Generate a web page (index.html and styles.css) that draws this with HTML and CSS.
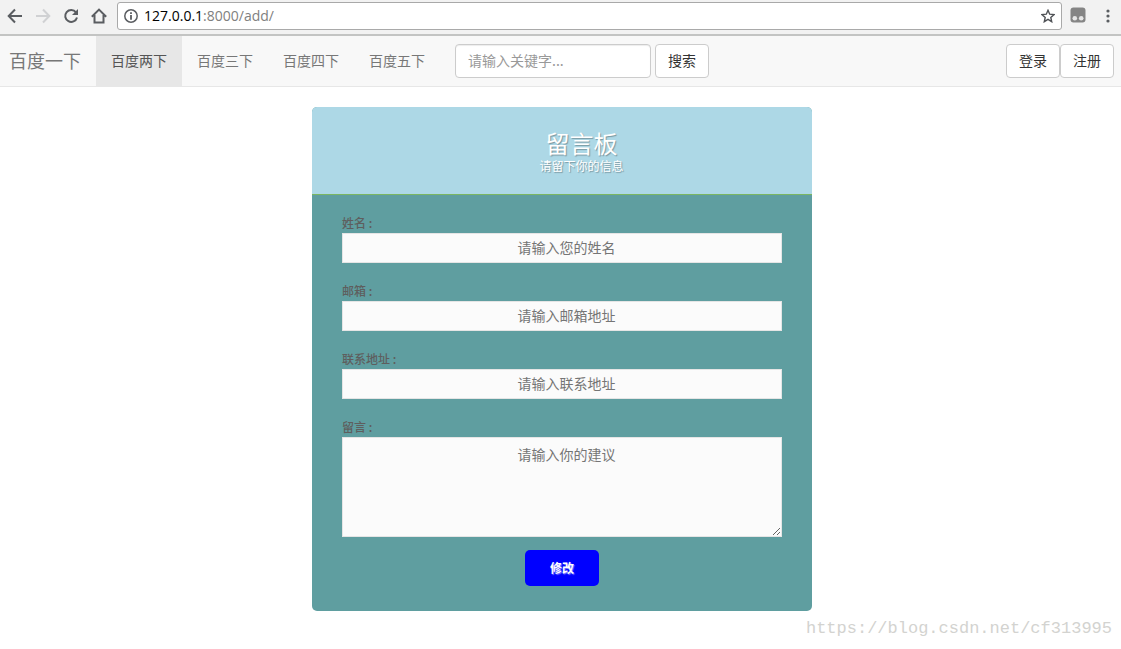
FILE: index.html
```html
<!DOCTYPE html>
<html lang="zh-CN">
<head>
<meta charset="utf-8">
<title>留言板</title>
<link rel="stylesheet" href="styles.css">
</head>
<body>
<div class="toolbar">
  <div class="toolbar-nav">
    <button class="tool" type="button" aria-label="后退"><svg width="16" height="16" viewBox="0 0 16 16"><path d="M15 8H2M8 1.5L1.7 8L8 14.5" fill="none" stroke="#5a5d61" stroke-width="2"/></svg></button>
    <button class="tool" type="button" aria-label="前进"><svg width="16" height="16" viewBox="0 0 16 16"><path d="M1 8H14M8 1.5L14.3 8L8 14.5" fill="none" stroke="#d0d1d3" stroke-width="2"/></svg></button>
    <button class="tool" type="button" aria-label="刷新"><svg width="16" height="16" viewBox="0 0 16 16"><path d="M13 4.3A6 6 0 1 0 14 9.5" fill="none" stroke="#5a5d61" stroke-width="2"/><path d="M15 1V7H9Z" fill="#5a5d61"/></svg></button>
    <button class="tool" type="button" aria-label="主页"><svg width="16" height="16" viewBox="0 0 16 16"><path d="M0.8 8.7L8 1.6L15.2 8.7M3.5 7V14.5H12.5V7" fill="none" stroke="#5a5d61" stroke-width="2"/></svg></button>
  </div>
  <div class="address">
    <svg width="14" height="14" viewBox="0 0 14 14"><circle cx="7" cy="7" r="6.2" fill="none" stroke="#5a5d61" stroke-width="1.5"/><path d="M6.1 3.2H7.9V5H6.1ZM6.1 6H7.9V10.8H6.1Z" fill="#5a5d61"/></svg>
    <span class="url"><span class="host">127.0.0.1</span>:8000/add/</span>
    <svg width="14" height="14" viewBox="0 0 14 14"><path d="M7 1.3L8.7 5.2L13 5.6L9.8 8.4L10.7 12.7L7 10.4L3.3 12.7L4.2 8.4L1 5.6L5.3 5.2Z" fill="none" stroke="#4f5256" stroke-width="1.4"/></svg>
  </div>
  <button class="tool" type="button" aria-label="扩展"><svg width="16" height="16" viewBox="0 0 16 16"><rect x="0.5" y="0.5" width="15" height="15" rx="3" fill="#858585"/><circle cx="4.8" cy="11.3" r="2.3" fill="#e6e6e6"/><circle cx="11.2" cy="11.3" r="2.3" fill="#e6e6e6"/></svg></button>
  <button class="tool menu" type="button" aria-label="菜单"><svg width="4" height="14" viewBox="0 0 4 14"><g fill="#5a5d61"><circle cx="2" cy="2" r="1.6"/><circle cx="2" cy="7" r="1.6"/><circle cx="2" cy="12" r="1.6"/></g></svg></button>
</div>
<nav class="navbar">
  <a class="brand" href="#">百度一下</a>
  <a class="nav-link active" href="#">百度两下</a>
  <a class="nav-link" href="#">百度三下</a>
  <a class="nav-link" href="#">百度四下</a>
  <a class="nav-link" href="#">百度五下</a>
  <form class="search">
    <input class="search-input" type="text" placeholder="请输入关键字..." aria-label="关键字">
    <button class="btn" type="button">搜索</button>
  </form>
  <div class="account">
    <button class="btn" type="button">登录</button>
    <button class="btn" type="button">注册</button>
  </div>
</nav>
<main class="page">
  <form class="card">
    <header class="card-head">
      <h1 class="title">留言板</h1>
      <p class="subtitle">请留下你的信息</p>
    </header>
    <div class="card-body">
      <div class="field"><label for="name">姓名 :</label><input class="control" id="name" type="text" placeholder="请输入您的姓名"></div>
      <div class="field"><label for="email">邮箱 :</label><input class="control" id="email" type="text" placeholder="请输入邮箱地址"></div>
      <div class="field"><label for="place">联系地址 :</label><input class="control" id="place" type="text" placeholder="请输入联系地址"></div>
      <div class="field"><label for="note">留言 :</label><textarea class="control area" id="note" placeholder="请输入你的建议"></textarea></div>
      <button class="submit" type="button">修改</button>
    </div>
  </form>
</main>
<footer class="watermark">https://blog.csdn.net/cf313995</footer>
</body>
</html>
```
FILE: styles.css
```css
* { box-sizing: border-box; }
body {
  margin: 0;
  background: #fff;
  color: #333;
  font: 14px/20px "Noto Sans CJK SC", sans-serif;
}
input, textarea, button { font: inherit; margin: 0; }

.toolbar {
  display: flex;
  align-items: center;
  gap: 8px;
  height: 36px;
  padding: 0 11px 4px 7px;
  background: #f2f2f2;
  border-bottom: 2px solid #c3c4c3;
}
.toolbar-nav { display: flex; gap: 12px; margin-right: 2px; padding-top: 1px; }
.tool { display: flex; padding: 0; border: 0; background: none; }
.menu { margin: 2px 0 0 12px; }
.address {
  flex: 1;
  display: flex;
  align-items: center;
  gap: 6px;
  height: 28px;
  margin-top: 2px;
  padding: 0 6px;
  background: #fff;
  border: 1px solid #a9a9a9;
  border-radius: 3px;
}
.url { flex: 1; color: #808080; font: 14px/20px "Open Sans", sans-serif; }
.host { color: #000; }

.navbar {
  display: flex;
  align-items: center;
  height: 51px;
  padding-right: 7px;
  background: #f8f8f8;
  border-bottom: 1px solid #e7e7e7;
}
.brand, .nav-link {
  padding: 0 15px 2px;
  color: #777;
  line-height: 48px;
  text-decoration: none;
}
.brand { padding-left: 9px; font-size: 18px; }
.nav-link.active { background: #e7e7e7; color: #555; }
.search { display: flex; gap: 4px; margin-left: 15px; }
.search-input {
  width: 196px;
  height: 34px;
  padding: 5px 12px 7px;
  border: 1px solid #ccc;
  border-radius: 4px;
  box-shadow: inset 0 1px 1px rgba(0, 0, 0, .075);
}
.search-input::placeholder { color: #999; }
.btn {
  height: 34px;
  padding: 5px 12px 7px;
  background: #fff;
  border: 1px solid #ccc;
  border-radius: 4px;
  color: #333;
}
.account { display: flex; margin-left: auto; }

.page { display: flex; justify-content: center; padding: 20px 0 0 3px; }
.card {
  width: 500px;
  background: #5f9ea0;
  border-radius: 5px;
  overflow: hidden;
  color: #5e5e5e;
  font-size: 12px;
}
.card-head {
  padding: 22px 0 20px 39px;
  background: #add8e6;
  border-bottom: 1px solid #7bb661;
  color: #fff;
  text-align: center;
  text-shadow: 1px 1px 1px rgba(0, 0, 0, .3);
}
.title { margin: 0; font-size: 24px; font-weight: 400; line-height: 28px; }
.subtitle { margin: 0; line-height: 17px; }
.card-body {
  display: flex;
  flex-direction: column;
  align-items: center;
  padding: 20px 30px 25px;
}
.field { display: flex; flex-direction: column; width: 100%; margin-bottom: 20px; }
.field label { padding-bottom: 2px; line-height: 16px; font-weight: 500; }
.control {
  width: 100%;
  height: 30px;
  padding: 0 0 2px 9px;
  background: #fbfbfb;
  border: 1px solid #e5e5e5;
  border-radius: 0;
  font-size: 14px;
  text-align: center;
}
.control::placeholder { color: #757575; }
.area { height: 100px; padding-top: 6px; resize: both; }
.field:last-of-type { margin-bottom: 13px; }
.submit {
  height: 36px;
  padding: 0 25px;
  background: #00f;
  border: 0;
  border-radius: 5px;
  color: #fff;
  font-weight: 700;
  text-shadow: 1px 1px 1px rgba(255, 255, 255, .5);
}
.watermark {
  padding: 6px 9px 0 0;
  color: #d3d3d0;
  font: 17px/24px "Liberation Mono", monospace;
  text-align: right;
}
```
